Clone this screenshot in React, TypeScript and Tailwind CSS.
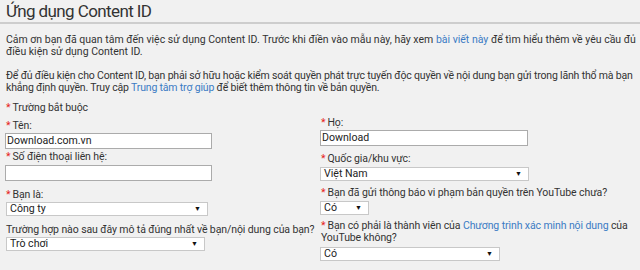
const Star = () => <span className="text-[#e62117] mr-[2px]">*</span>;

function TextBox({ value, width }: { value: string; width: string }) {
  return (
    <div
      className={`${width} h-[16px] bg-white border border-[#ababab] px-[1px] flex items-center text-[10.6px] text-[#222]`}
    >
      {value}
    </div>
  );
}

function Select({ value, width }: { value: string; width: string }) {
  return (
    <div
      className={`${width} h-[14px] bg-white border border-[#c8c8c8] pl-[3px] pr-[6px] flex items-center justify-between text-[10.6px] text-[#222]`}
    >
      <span>{value}</span>
      <span className="text-[7px] leading-none text-[#111]">▼</span>
    </div>
  );
}

function Label({ children, required = true }: { children: React.ReactNode; required?: boolean }) {
  return (
    <div className="pl-[1px] text-[10.5px] leading-[12px] text-[#333] tracking-[-0.1px]">
      {required && <Star />}
      {children}
    </div>
  );
}

export default function App() {
  return (
    <div
      className="w-[640px] h-[270px] overflow-hidden bg-[#f1f1f1] text-[#333]"
      style={{ fontFamily: "Roboto, 'Liberation Sans', Arial, sans-serif" }}
    >
      <h1 className="h-[22px] px-[6px] text-[17px] leading-[22px] tracking-[-0.6px] text-[#333]">
        Ứng dụng Content ID
      </h1>
      <div className="h-[2px] bg-[#cdcdcd]" />

      <div className="pl-[6px] pr-[1px] text-[10.5px] leading-[12px] text-[#333]">
        <p className="mt-[10px]">
          Cảm ơn bạn đã quan tâm đến việc sử dụng Content ID. Trước khi điền vào mẫu này, hãy xem{" "}
          <a className="text-[#3b7bc4]">bài viết này</a> để tìm hiểu thêm về yêu cầu đủ điều kiện sử
          dụng Content ID.
        </p>
        <p className="mt-[12px] tracking-[-0.17px]">
          Để đủ điều kiện cho Content ID, bạn phải sở hữu hoặc kiểm soát quyền phát trực tuyến độc
          quyền về nội dung bạn gửi trong lãnh thổ mà bạn khẳng định quyền. Truy cập{" "}
          <a className="text-[#3b7bc4]">Trung tâm trợ giúp</a> để biết thêm thông tin về bản quyền.
        </p>
      </div>

      <div className="flex px-[5px] mt-[8px]">
        {/* cột trái */}
        <div className="w-[315px] flex flex-col">
          <Label>Trường bắt buộc</Label>
          <div className="mt-[6px]">
            <Label>Tên:</Label>
          </div>
          <div className="mt-[1px]">
            <TextBox value="Download.com.vn" width="w-[207px]" />
          </div>
          <div className="mt-[2px]">
            <Label>Số điện thoại liên hệ:</Label>
          </div>
          <div className="mt-[2px]">
            <TextBox value="" width="w-[207px]" />
          </div>
          <div className="mt-[8px]">
            <Label>Bạn là:</Label>
          </div>
          <div className="mt-[1px] pl-[1px]">
            <Select value="Công ty" width="w-[202px]" />
          </div>
          <div className="mt-[8px] whitespace-nowrap">
            <Label required={false}>Trường hợp nào sau đây mô tả đúng nhất về bạn/nội dung của bạn?</Label>
          </div>
          <div className="mt-[1px] pl-[1px]">
            <Select value="Trò chơi" width="w-[199px]" />
          </div>
        </div>

        {/* cột phải */}
        <div className="flex-1 flex flex-col pt-[15px]">
          <Label>Họ:</Label>
          <div className="mt-[1px]">
            <TextBox value="Download" width="w-[208px]" />
          </div>
          <div className="mt-[7px]">
            <Label>Quốc gia/khu vực:</Label>
          </div>
          <div className="mt-[2px]">
            <Select value="Việt Nam" width="w-[209px]" />
          </div>
          <div className="mt-[6px]">
            <Label>Bạn đã gửi thông báo vi phạm bản quyền trên YouTube chưa?</Label>
          </div>
          <div className="mt-[2px]">
            <Select value="Có" width="w-[49px]" />
          </div>
          <div className="mt-[5px]">
            <Label>
              Bạn có phải là thành viên của{" "}
              <a className="text-[#3b7bc4]">Chương trình xác minh nội dung</a> của YouTube không?
            </Label>
          </div>
          <div className="mt-[3px]">
            <Select value="Có" width="w-[180px]" />
          </div>
        </div>
      </div>
    </div>
  );
}
